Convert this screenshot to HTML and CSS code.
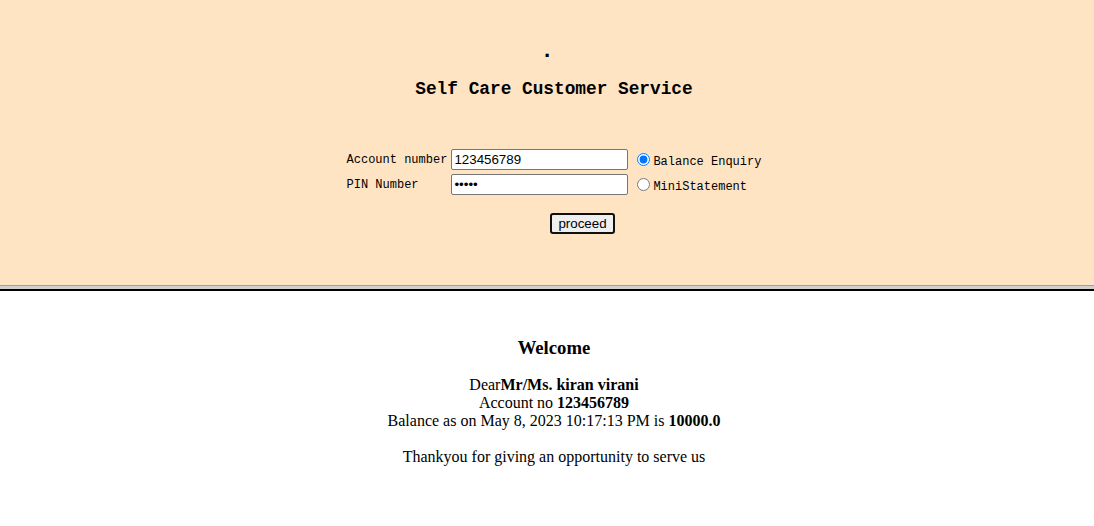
FILE: index.html
```html
<!DOCTYPE html>
<html>
<head>
<meta charset="utf-8">
<link rel="stylesheet" href="styles.css">
</head>
<body>
<div class="top-frame">
  <div class="dot">.</div>
  <h2 class="title">Self Care Customer Service</h2>
  <form class="form">
    <div class="grid">
      <label class="lbl">Account number</label>
      <input class="field" type="text" value="123456789">
      <label class="opt"><input class="radio" type="radio" name="t" checked><span class="opt-text">Balance Enquiry</span></label>
      <label class="lbl">PIN Number</label>
      <input class="field" type="password" value="12345">
      <label class="opt"><input class="radio" type="radio" name="t"><span class="opt-text">MiniStatement</span></label>
    </div>
    <div class="actions"><button class="btn" type="button">proceed</button></div>
  </form>
</div>
<div class="divider"></div>
<div class="bottom-frame">
  <h3 class="welcome">Welcome</h3>
  <p class="msg">Dear<b>Mr/Ms. kiran virani</b><br>Account no <b>123456789</b><br>Balance as on May 8, 2023 10:17:13 PM is <b>10000.0</b></p>
  <p class="thanks">Thankyou for giving an opportunity to serve us</p>
</div>
</body>
</html>
```
FILE: styles.css
```css
html, body {
  margin: 0;
  padding: 0;
  background: #ffffff;
}
.top-frame {
  height: 285px;
  background: #ffe4c4;
  box-sizing: border-box;
  padding-top: 42px;
  font-family: "Liberation Mono", "DejaVu Sans Mono", monospace;
  color: #000;
}
.dot {
  text-align: center;
  font-weight: bold;
  font-size: 22px;
  line-height: 20px;
}
.title {
  margin: 16px 0 0;
  padding-left: 14px;
  text-align: center;
  font-size: 17.8px;
  line-height: 22px;
  font-weight: bold;
}
.form {
  margin: 49px 0 0;
}
.grid {
  display: grid;
  grid-template-columns: auto auto auto;
  justify-content: center;
  align-items: center;
  column-gap: 4px;
  row-gap: 4px;
  padding-left: 14px;
}
.lbl {
  font-size: 12px;
}
.opt {
  font-size: 12px;
  display: flex;
  align-items: center;
  padding-left: 4px;
}
.opt-text {
  padding-top: 4px;
}
.radio {
  margin: 0 3px 0 1px;
  width: 13px;
  height: 13px;
}
.field {
  width: 177px;
  height: 21px;
  box-sizing: border-box;
  border: 1px solid #767676;
  border-radius: 2px;
  padding: 1px 2px;
  font-family: Arial, "Liberation Sans", sans-serif;
  font-size: 13.33px;
  background: #fff;
  color: #000;
}
.actions {
  text-align: center;
  margin-top: 18px;
  padding-left: 71px;
}
.btn {
  font-family: Arial, "Liberation Sans", sans-serif;
  font-size: 13.33px;
  height: 21px;
  padding: 0 6px;
  background: #efefef;
  border: 2px solid #101010;
  border-radius: 3px;
  color: #000;
}
.divider {
  height: 6px;
  box-sizing: border-box;
  border-top: 1px solid #a0a0a0;
  border-bottom: 2px solid #000;
  background: #d0d0d0;
}
.bottom-frame {
  font-family: "Liberation Serif", "Times New Roman", serif;
  font-size: 16px;
  text-align: center;
  color: #000;
  padding-top: 46px;
  padding-left: 14px;
}
.welcome {
  margin: 0;
  font-size: 18.72px;
  line-height: 22px;
}
.msg {
  margin: 17px 0 0;
  line-height: 18px;
}
.thanks {
  margin: 18px 0 0;
  line-height: 18px;
}
```
